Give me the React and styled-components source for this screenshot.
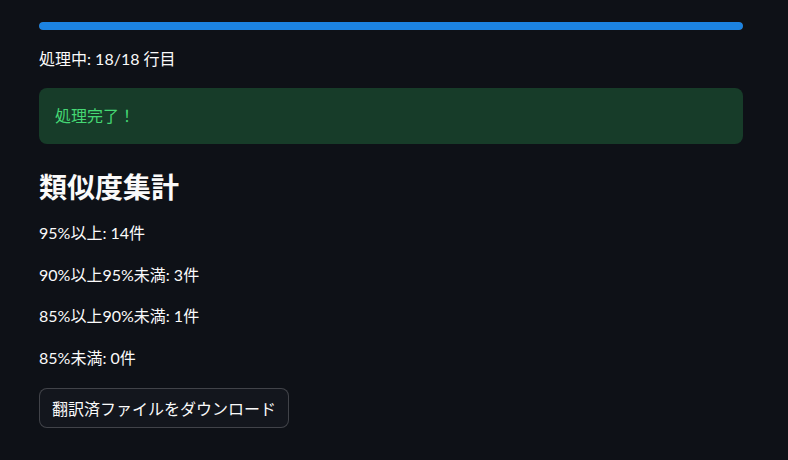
import React from "react";
import styled, { createGlobalStyle } from "styled-components";

const Global = createGlobalStyle`
  body {
    margin: 0;
    background: #0e1117;
    color: #fafafa;
    font-family: "Lato", "Noto Sans CJK JP", sans-serif;
  }
`;

const Main = styled.div`
  width: 704px;
  padding: 22px 0 0 39px;
  display: flex;
  flex-direction: column;
  gap: 16px;
`;

const Track = styled.div`
  height: 8px;
  border-radius: 4px;
  background: rgba(250, 250, 250, 0.2);
  overflow: hidden;
`;

const Fill = styled.div`
  height: 100%;
  background: #1c83e1;
  border-radius: 4px;
`;

const Text = styled.p`
  margin: 0;
  font-size: 16px;
  line-height: 25.6px;
`;

const Alert = styled.div`
  background: #173c29;
  color: #45d874;
  border-radius: 8px;
  padding: 15px 16px 16px;
  font-size: 16px;
  line-height: 25.6px;
`;

const Heading = styled.h3`
  margin: 0;
  padding-top: 10px;
  font-size: 28px;
  line-height: 34px;
  font-weight: 700;
`;

const Button = styled.button`
  align-self: flex-start;
  margin-top: 1px;
  height: 40px;
  padding: 0 12px;
  border: 1px solid rgba(250, 250, 250, 0.2);
  border-radius: 8px;
  background: #13161d;
  color: #fafafa;
  font-family: inherit;
  font-size: 16px;
`;

const stats = [
  "95%以上: 14件",
  "90%以上95%未満: 3件",
  "85%以上90%未満: 1件",
  "85%未満: 0件",
];

export default function App() {
  const done = 18;
  const total = 18;
  return (
    <>
      <Global />
      <Main>
        <Track>
          <Fill style={{ width: `${(done / total) * 100}%` }} />
        </Track>
        <Text>処理中: {done}/{total} 行目</Text>
        <Alert>処理完了！</Alert>
        <Heading>類似度集計</Heading>
        {stats.map((s) => (
          <Text key={s}>{s}</Text>
        ))}
        <Button>翻訳済ファイルをダウンロード</Button>
      </Main>
    </>
  );
}
